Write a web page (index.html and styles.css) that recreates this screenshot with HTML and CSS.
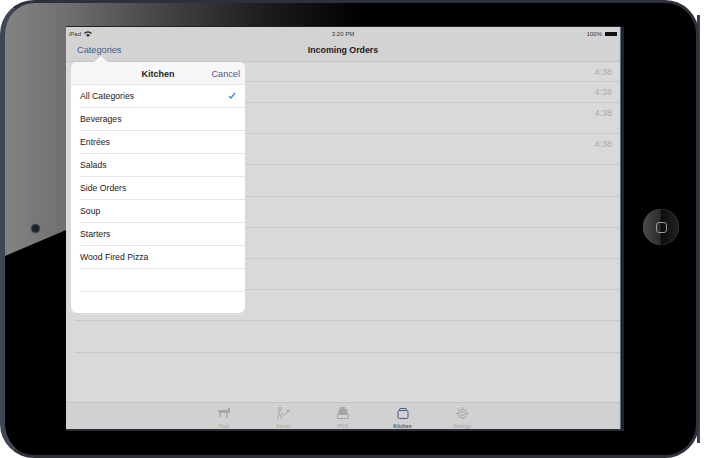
FILE: index.html
```html
<!DOCTYPE html>
<html lang="en">
  <head>
    <meta charset="UTF-8" />
    <title>Kitchen - Incoming Orders</title>
    <link rel="stylesheet" href="styles.css">
  </head>
  <body>
    <span class="side-edge"></span>
    <main class="device">
      <svg class="glare" width="694" height="260" viewBox="0 0 694 260">
        <defs>
          <linearGradient id="glare-fill" x1="0" y1="0" x2="1" y2="0">
            <stop offset="0" stop-color="#828282" />
            <stop offset="0.1" stop-color="#707070" />
            <stop offset="0.25" stop-color="#484848" />
            <stop offset="0.43" stop-color="#1e1e1e" />
            <stop offset="0.6" stop-color="#000" />
          </linearGradient>
        </defs>
        <polygon points="0,253 595,0 0,0" fill="url(#glare-fill)" />
      </svg>
      <span class="camera"></span>
      <section class="screen">
        <div class="status-bar">
          <span class="carrier">iPad
            <svg width="8" height="6" viewBox="0 0 8 6"><path d="M0 2a5.600 5.600 0 0 1 8 0L7 3a4.200 4.200 0 0 0-6 0zM2 4a2.800 2.800 0 0 1 4 0L4 6z" fill="#333" /></svg>
          </span>
          <span class="clock">3:20 PM</span>
          <span class="battery-wrap">100% <span class="battery"></span></span>
        </div>
        <header class="nav-bar">
          <span class="nav-link">Categories</span>
          <h1 class="nav-title">Incoming Orders</h1>
        </header>
        <div class="orders">
          <div class="order h20"><span>4:38</span></div>
          <div class="order h21"><span>4:38</span></div>
          <div class="order h31"><span>4:38</span></div>
          <div class="order h31"><span>4:38</span></div>
          <div class="order h32"></div>
          <div class="order h31"></div>
          <div class="order h31"></div>
          <div class="order h31"></div>
          <div class="order h31"></div>
          <div class="order h32"></div>
          <div class="order h31"></div>
        </div>
        <nav class="tab-bar">
          <div class="tab">
            <svg width="14" height="11" viewBox="0 0 14 11"><path d="M1 3h10V1h2v5h-2.500v5H9V6H4v4H2.500V6L1 5z" fill="#a6a6a6" /></svg>
            <span>Host</span>
          </div>
          <div class="tab">
            <svg width="14" height="12" viewBox="0 0 14 12" fill="none" stroke="#a6a6a6"><circle cx="3" cy="2" r="1.500" /><path d="M2 4v4h2v4M1 8v4M4 6l3 2 5-4M9 3l4 1" /></svg>
            <span>Server</span>
          </div>
          <div class="tab">
            <svg width="12" height="12" viewBox="0 0 12 12"><path d="M3 0h5v2h2l1 5H1l1-5h1z" fill="#a6a6a6" /><path d="M.5 7.500h11v4H.5z" fill="none" stroke="#a6a6a6" /></svg>
            <span>POS</span>
          </div>
          <div class="tab active">
            <svg width="12" height="12" viewBox="0 0 12 12" fill="none" stroke="#4a5a8c"><rect x="1" y="3.500" width="10" height="8" rx="1.500" /><path d="M2 3.500l1-2h6l1 2" /></svg>
            <span>Kitchen</span>
          </div>
          <div class="tab">
            <svg width="13" height="13" viewBox="0 0 13 13" fill="none" stroke="#a6a6a6"><circle cx="6.500" cy="6.500" r="2" /><circle cx="6.500" cy="6.500" r="4.200" /><path d="M6.500 0v2.300M6.500 10.700V13M0 6.500h2.300M10.700 6.500H13M1.900 1.900l1.600 1.600M9.500 9.500l1.600 1.600M1.900 11.100l1.600-1.600M9.500 3.500l1.600-1.600" /></svg>
            <span>Settings</span>
          </div>
        </nav>
        <aside class="popover">
          <span class="popover-arrow"></span>
          <header class="popover-head">
            <h2 class="popover-title">Kitchen</h2>
            <span class="popover-cancel">Cancel</span>
          </header>
          <ul class="category-list">
            <li class="category">All Categories
              <svg width="8" height="7" viewBox="0 0 8 7"><path d="M1 4l2 2 4-5" fill="none" stroke="#3f86e6" stroke-width="1.300" /></svg>
            </li>
            <li class="category">Beverages</li>
            <li class="category">Entrées</li>
            <li class="category">Salads</li>
            <li class="category">Side Orders</li>
            <li class="category">Soup</li>
            <li class="category">Starters</li>
            <li class="category">Wood Fired Pizza</li>
            <li class="category"></li>
            <li class="category"></li>
          </ul>
        </aside>
      </section>
      <div class="home-button"><span></span></div>
    </main>
  </body>
</html>
```

FILE: styles.css
```css
* {
  box-sizing: border-box;
}

body {
  font-family: "Liberation Sans", Arial, sans-serif;
  margin: 0;
  padding: 0;
  background-color: #fff;
  color: #222;
}

.side-edge {
  position: absolute;
  left: 697px;
  top: 15px;
  width: 3px;
  height: 428px;
  background-color: #3a404c;
}

.device {
  position: relative;
  width: 699px;
  height: 458px;
  padding: 24px 0 0 61px;
  border: 3px solid #2c313b;
  border-left: 5px solid #3f4757;
  border-radius: 34px;
  background-color: #000;
  overflow: hidden;
}

.glare {
  position: absolute;
  left: 0;
  top: 0;
}

.camera {
  position: absolute;
  left: 27px;
  top: 222px;
  width: 7px;
  height: 7px;
  border-radius: 50%;
  background-color: #1c2234;
  box-shadow: 0 0 1px 1px #333;
}

.screen {
  position: relative;
  width: 555px;
  height: 402px;
  display: flex;
  flex-direction: column;
  background-color: #d9d9d9;
  border-right: 1px solid #5a6a8a;
  box-shadow: 3px 0 0 #222, 0 -1px 0 #222, 3px 2px 0 #2a2d35, 0 2px 0 #2a2d35;
}

.status-bar {
  height: 13px;
  padding: 0 3px;
  display: flex;
  justify-content: space-between;
  align-items: center;
  font-size: 6px;
  background-color: #d3d3d3;
  color: #333;
}

.carrier,
.battery-wrap {
  display: flex;
  align-items: center;
  gap: 3px;
  width: 60px;
}

.battery-wrap {
  justify-content: flex-end;
}

.battery {
  width: 12px;
  height: 4px;
  background-color: #111;
}

.nav-bar {
  position: relative;
  height: 22px;
  padding-bottom: 1px;
  display: flex;
  align-items: center;
  justify-content: center;
  background-color: #d3d3d3;
  border-bottom: 1px solid #c4c4c4;
}

.nav-link {
  position: absolute;
  left: 11px;
  font-size: 9.200px;
  color: #4a5a8c;
}

.nav-title {
  margin: 0;
  font-size: 8.800px;
  font-weight: bold;
  color: #1c1c1c;
}

.orders {
  flex: 1;
  padding-left: 9px;
}

.order {
  display: flex;
  justify-content: flex-end;
  padding: 5px 8px 0 0;
  border-bottom: 1px solid #c8c8c8;
  font-size: 9px;
  color: #a9a9a9;
}

.order:last-child {
  border-bottom: none;
}

.h20 { height: 20px; }
.h21 { height: 21px; }
.h31 { height: 31px; }
.h32 { height: 32px; }

.tab-bar {
  height: 27px;
  display: flex;
  justify-content: center;
  background-color: #d1d1d1;
  border-top: 1px solid #c2c2c2;
}

.tab {
  width: 59.500px;
  height: 26px;
  padding-top: 4px;
  display: flex;
  flex-direction: column;
  align-items: center;
  justify-content: space-between;
  font-size: 5px;
  color: #a6a6a6;
}

.tab.active {
  color: #4a5a8c;
  font-weight: bold;
}

.popover {
  position: absolute;
  left: 5px;
  top: 35px;
  width: 174px;
  height: 251px;
  border-radius: 6px;
  background-color: #fff;
}

.popover-arrow {
  position: absolute;
  left: 23px;
  top: -6px;
  border-left: 7px solid transparent;
  border-right: 7px solid transparent;
  border-bottom: 6px solid #f7f7f7;
}

.popover-head {
  position: relative;
  height: 23px;
  padding-top: 1px;
  display: flex;
  align-items: center;
  justify-content: center;
  border-radius: 6px 6px 0 0;
  background-color: #f7f7f7;
  border-bottom: 1px solid #e4e4e4;
}

.popover-title {
  margin: 0;
  font-size: 9px;
  font-weight: bold;
  color: #1c1c1c;
}

.popover-cancel {
  position: absolute;
  right: 5px;
  font-size: 9.200px;
  color: #4a5a8c;
}

.category-list {
  list-style: none;
  margin: 0;
  padding: 0 0 0 9px;
}

.category {
  height: 23px;
  padding: 0 9px 1px 0;
  display: flex;
  align-items: center;
  justify-content: space-between;
  font-size: 8.700px;
  color: #222;
  border-bottom: 1px solid #e6e6e6;
}

.home-button {
  position: absolute;
  left: 638px;
  top: 206px;
  width: 36px;
  height: 36px;
  display: flex;
  align-items: center;
  justify-content: center;
  border-radius: 50%;
  background: linear-gradient(90deg, #4a4a4a 0, #2c2c2c 48%, #0c0c0c 50%, #222 100%);
  box-shadow: inset 0 0 1px #777;
}

.home-button span {
  width: 11px;
  height: 11px;
  border: 1.500px solid #999;
  border-radius: 3px;
}
```
